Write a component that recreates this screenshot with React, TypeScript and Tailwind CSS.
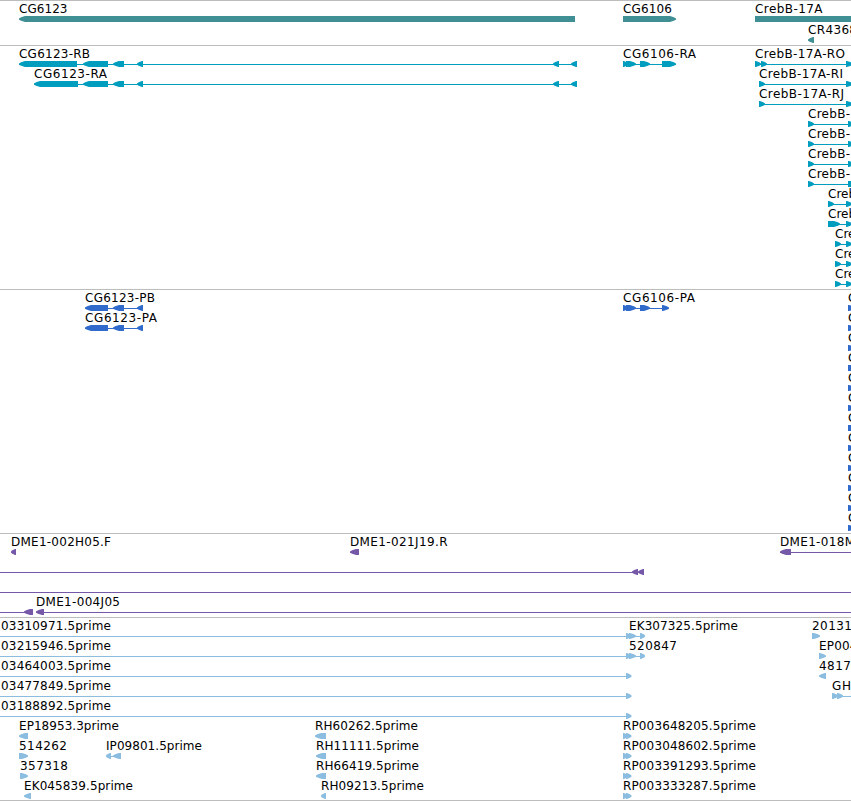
type Dir = "left" | "right";

interface Feature {
  row: number;
  x?: number;
  label?: string;
  width?: number;
  dir: Dir;
  // [start, end] of every exon
  blocks: [number, number][];
  // the intron line under the exons
  line?: [number, number];
}

interface TrackData {
  name: string;
  height: string;
  fill: string;
  features: Feature[];
}

const genes: Feature[] = [
  { row: 0, x: 19, label: "CG6123", width: 48.5, dir: "left", blocks: [[19, 575]] },
  { row: 0, x: 623, label: "CG6106", width: 49, dir: "right", blocks: [[623, 676]] },
  { row: 0, x: 755, label: "CrebB-17A", width: 67.5, dir: "right", blocks: [[755, 900]] },
  { row: 1.05, x: 808, label: "CR4368", width: 49, dir: "left", blocks: [[808, 814]] },
];

const transcripts: Feature[] = [
  {
    row: 0,
    x: 19,
    label: "CG6123-RB",
    width: 71,
    dir: "left",
    blocks: [[19, 77], [83, 108], [113, 124], [137, 143], [553, 559], [571, 577]],
    line: [19, 577],
  },
  {
    row: 1,
    x: 34,
    label: "CG6123-RA",
    width: 73,
    dir: "left",
    blocks: [[34, 78], [83, 108], [113, 124], [137, 143], [553, 559], [571, 577]],
    line: [34, 577],
  },
  {
    row: 0,
    x: 623,
    label: "CG6106-RA",
    width: 73,
    dir: "right",
    blocks: [[623, 628], [626, 636], [640, 650], [662, 676]],
    line: [623, 676],
  },
  { row: 0, x: 755, label: "CrebB-17A-RO", width: 90, dir: "right", blocks: [[755, 761], [761, 767], [846, 853]], line: [755, 851] },
  { row: 1, x: 759, label: "CrebB-17A-RI", width: 84, dir: "right", blocks: [[759, 765], [846, 853]], line: [759, 851] },
  { row: 2, x: 759, label: "CrebB-17A-RJ", width: 85, dir: "right", blocks: [[759, 765], [846, 853]], line: [759, 851] },
  { row: 3, x: 808, label: "CrebB-", width: 42, dir: "right", blocks: [[808, 814], [848, 854]], line: [808, 851] },
  { row: 4, x: 808, label: "CrebB-", width: 42, dir: "right", blocks: [[808, 814], [848, 854]], line: [808, 851] },
  { row: 5, x: 808, label: "CrebB-", width: 42, dir: "right", blocks: [[808, 814], [848, 854]], line: [808, 851] },
  { row: 6, x: 808, label: "CrebB-", width: 42, dir: "right", blocks: [[808, 814], [848, 870]], line: [808, 851] },
  { row: 7, x: 828, label: "Creb", dir: "right", blocks: [[828, 834], [846, 852]], line: [828, 851] },
  { row: 8, x: 828, label: "Creb", dir: "right", blocks: [[828, 840], [846, 852]], line: [828, 851] },
  { row: 9, x: 835, label: "Cre", dir: "right", blocks: [[835, 841], [846, 852]], line: [835, 851] },
  { row: 10, x: 835, label: "Cre", dir: "right", blocks: [[835, 841], [846, 852]], line: [835, 851] },
  { row: 11, x: 835, label: "Cre", dir: "right", blocks: [[835, 841], [846, 852]], line: [835, 851] },
];

const proteins: Feature[] = [
  { row: 0, x: 85, label: "CG6123-PB", width: 70, dir: "left", blocks: [[85, 108], [113, 124], [137, 143]], line: [85, 143] },
  { row: 1, x: 85, label: "CG6123-PA", width: 72, dir: "left", blocks: [[85, 108], [113, 124], [137, 143]], line: [85, 143] },
  {
    row: 0,
    x: 623,
    label: "CG6106-PA",
    width: 72,
    dir: "right",
    blocks: [[623, 628], [626, 636], [640, 650], [662, 669]],
    line: [623, 669],
  },
  ...Array.from({ length: 12 }, (_, row): Feature => ({
    row,
    x: 848,
    label: "C",
    dir: "right",
    blocks: [[848, row === 3 || row === 6 ? 870 : 855]],
  })),
];

const bacs: Feature[] = [
  { row: 0, x: 11, label: "DME1-002H05.F", width: 100, dir: "left", blocks: [[11, 16]] },
  { row: 0, x: 350, label: "DME1-021J19.R", width: 97.5, dir: "left", blocks: [[350, 359]] },
  { row: 0, x: 780, label: "DME1-018M", width: 75, dir: "left", blocks: [[780, 791]], line: [780, 851] },
  { row: 1, dir: "left", blocks: [[632, 638], [638, 644]], line: [0, 644] },
  { row: 2, dir: "left", blocks: [], line: [0, 851] },
  { row: 3, dir: "left", blocks: [[24, 33]], line: [0, 33] },
  { row: 3, x: 36, label: "DME1-004J05", width: 84, dir: "left", blocks: [[36, 44]], line: [36, 851] },
];

const ests: Feature[] = [
  { row: 0, x: 1, label: "03310971.5prime", width: 110, dir: "right", blocks: [[626, 631], [629, 636], [640, 645]], line: [0, 645] },
  { row: 1, x: 1, label: "03215946.5prime", width: 110, dir: "right", blocks: [[626, 631], [629, 636], [640, 645]], line: [0, 645] },
  { row: 2, x: 1, label: "03464003.5prime", width: 110, dir: "right", blocks: [[626, 631.5]], line: [0, 630] },
  { row: 3, x: 1, label: "03477849.5prime", width: 110, dir: "right", blocks: [[626, 631.5]], line: [0, 630] },
  { row: 4, x: 1, label: "03188892.5prime", width: 110, dir: "right", blocks: [[626, 631.5]], line: [0, 630] },
  { row: 0, x: 629, label: "EK307325.5prime", width: 109, dir: "right", blocks: [] },
  { row: 1, x: 629, label: "520847", width: 48, dir: "right", blocks: [] },
  { row: 0, x: 812, label: "20131", width: 40, dir: "right", blocks: [[812, 820]] },
  { row: 1, x: 819, label: "EP004", width: 38.5, dir: "right", blocks: [[819, 826]] },
  { row: 2, x: 819, label: "4817", width: 32, dir: "left", blocks: [[819, 826]] },
  { row: 3, x: 832, label: "GH", width: 19, dir: "right", blocks: [[832, 838], [837, 843]], line: [832, 851] },
  { row: 5, x: 19, label: "EP18953.3prime", width: 100, dir: "left", blocks: [[19, 28]] },
  { row: 6, x: 19, label: "514262", width: 48, dir: "right", blocks: [[19, 28]] },
  { row: 7, x: 20, label: "357318", width: 48, dir: "right", blocks: [[20, 28]] },
  { row: 8, x: 24, label: "EK045839.5prime", width: 109, dir: "left", blocks: [[24, 31]] },
  { row: 6, x: 106, label: "IP09801.5prime", width: 96, dir: "left", blocks: [[106, 111], [113, 121]], line: [106, 121] },
  { row: 5, x: 315, label: "RH60262.5prime", width: 103, dir: "left", blocks: [[315, 326]] },
  { row: 6, x: 316, label: "RH11111.5prime", width: 103, dir: "left", blocks: [[316, 326]] },
  { row: 7, x: 316, label: "RH66419.5prime", width: 103, dir: "left", blocks: [[316, 326]] },
  { row: 8, x: 321, label: "RH09213.5prime", width: 103, dir: "left", blocks: [[321, 326]] },
  { row: 5, x: 623, label: "RP003648205.5prime", width: 133, dir: "right", blocks: [[623, 628], [626, 631.5]] },
  { row: 6, x: 623, label: "RP003048602.5prime", width: 133, dir: "right", blocks: [[623, 628], [626, 631.5]] },
  { row: 7, x: 623, label: "RP003391293.5prime", width: 133, dir: "right", blocks: [[623, 628], [626, 631.5]] },
  { row: 8, x: 623, label: "RP003333287.5prime", width: 133, dir: "right", blocks: [[623, 628], [626, 631.5]] },
];

const tracks: TrackData[] = [
  { name: "genes", height: "h-[45px]", fill: "fill-[#3f8f94]", features: genes },
  { name: "transcripts", height: "h-[244px]", fill: "fill-[#009dbf]", features: transcripts },
  { name: "proteins", height: "h-[244px]", fill: "fill-[#306bcc]", features: proteins },
  { name: "bacs", height: "h-[84px]", fill: "fill-[#7558a8]", features: bacs },
  { name: "ests", height: "h-[184px] border-b", fill: "fill-[#8abddf]", features: ests },
];

const ROW = 20;

// box with a slightly rounded-off arrow head on the strand side
function arrow(start: number, end: number, mid: number, dir: Dir) {
  const head = Math.min(6, end - start - 1);
  const sign = dir === "left" ? 1 : -1;
  const tip = dir === "left" ? start : end;
  const back = dir === "left" ? end : start;
  const neck = tip + sign * head;
  const bulge = tip + sign * head * 0.35;
  return [
    `M${tip} ${mid - 0.5}`,
    `L${bulge} ${mid - 1.8}`,
    `L${neck} ${mid - 3}`,
    `H${back}`,
    `V${mid + 3}`,
    `H${neck}`,
    `L${bulge} ${mid + 1.8}`,
    `L${tip} ${mid + 0.7}Z`,
  ].join("");
}

function FeatureGlyph({ feature }: { feature: Feature }) {
  const top = feature.row * ROW;
  const mid = top + 18;
  return (
    <g>
      {feature.line && (
        <rect
          x={feature.line[0]}
          y={mid}
          width={feature.line[1] - feature.line[0]}
          height={1}
          shapeRendering="crispEdges"
        />
      )}
      {feature.blocks.map(([start, end]) => (
        <path key={start} d={arrow(start, end, mid, feature.dir)} />
      ))}
      {feature.label && (
        <text x={feature.x} y={top + 12} textLength={feature.width} className="fill-black">
          {feature.label}
        </text>
      )}
    </g>
  );
}

function Track({ track }: { track: TrackData }) {
  return (
    <section className={`${track.height} w-full shrink-0 overflow-hidden border-t border-[#bdbdbd]`}>
      <svg className={`block h-full w-full ${track.fill}`}>
        {track.features.map((f, i) => (
          <FeatureGlyph key={i} feature={f} />
        ))}
      </svg>
    </section>
  );
}

export default function App() {
  return (
    <main className="flex h-[801px] w-[851px] flex-col overflow-hidden bg-white font-['DejaVu_Sans',sans-serif] text-[12px]">
      {tracks.map((t) => (
        <Track key={t.name} track={t} />
      ))}
    </main>
  );
}
